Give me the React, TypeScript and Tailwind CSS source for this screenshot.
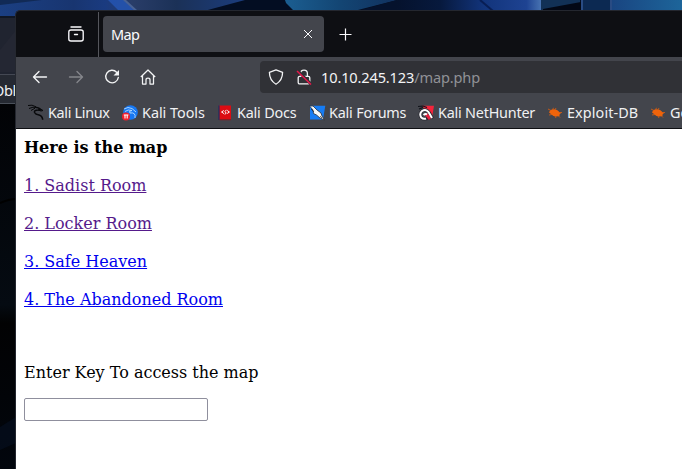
import type { ReactNode } from 'react';

function Wallpaper() {
  return (
    <svg className="absolute inset-0" width="682" height="469" viewBox="0 0 682 469">
      <defs>
        <linearGradient id="sky" gradientUnits="userSpaceOnUse" x1="0" y1="0" x2="245" y2="0">
          <stop offset="0" stopColor="#1b3f82" />
          <stop offset="0.3" stopColor="#183570" />
          <stop offset="0.43" stopColor="#1a3b80" />
          <stop offset="0.54" stopColor="#293d68" />
          <stop offset="0.72" stopColor="#1b3157" />
          <stop offset="1" stopColor="#1b3c7d" />
        </linearGradient>
        <linearGradient id="ray" gradientUnits="userSpaceOnUse" x1="285" y1="0" x2="397" y2="0">
          <stop offset="0" stopColor="#1b5e91" />
          <stop offset="0.5" stopColor="#134573" />
          <stop offset="1" stopColor="#11315f" />
        </linearGradient>
        <linearGradient id="blue" gradientUnits="userSpaceOnUse" x1="397" y1="0" x2="541" y2="0">
          <stop offset="0" stopColor="#05122d" />
          <stop offset="0.3" stopColor="#07193d" />
          <stop offset="0.6" stopColor="#12347b" />
          <stop offset="0.9" stopColor="#1e4392" />
          <stop offset="1" stopColor="#4772b1" />
        </linearGradient>
        <linearGradient id="right" gradientUnits="userSpaceOnUse" x1="612" y1="0" x2="682" y2="0">
          <stop offset="0" stopColor="#194581" />
          <stop offset="1" stopColor="#1d659a" />
        </linearGradient>
        <linearGradient id="side" x1="0" x2="0" y1="0" y2="1">
          <stop offset="0" stopColor="#020306" />
          <stop offset="0.55" stopColor="#050b12" />
          <stop offset="0.6" stopColor="#020203" />
          <stop offset="1" stopColor="#02060d" />
        </linearGradient>
      </defs>
      <rect width="682" height="469" fill="#030d22" />
      <path d="M0 0H245L204 11L16 26H0Z" fill="url(#sky)" />
      <path d="M0 0H42L0 5Z" fill="#112a56" />
      <path d="M108 0H124L136 11H119Z" fill="#2455b3" opacity=".85" />
      <path d="M123 0H126L138 11H135Z" fill="#496293" />
      <path d="M285 0H397L354 11H294L286 3Z" fill="url(#ray)" />
      <path d="M397 0H541V12H354Z" fill="url(#blue)" />
      <path d="M480 0L493 11" stroke="#081e55" strokeWidth="2" />
      <path d="M541 0H580V12H541Z" fill="#123156" />
      <path d="M543 9L581 2V12H543Z" fill="#030815" />
      <path d="M581 0H611V12H581Z" fill="#0c2952" />
      <path d="M581 0H583V12H581ZM610 0H612V12H610Z" fill="#294b83" />
      <rect x="612" width="70" height="12" fill="url(#right)" />
      <path d="M0 17H16V105H0Z" fill="#202430" />
      <path d="M0 17H16" stroke="#101725" strokeWidth="2" />
      <path d="M0 50L16 30V72H0Z" fill="#242733" />
      <rect y="74" width="16" height="1" fill="#444853" />
      <rect y="75" width="16" height="28" fill="#252932" />
      <rect y="103" width="16" height="1" fill="#4a505a" />
      <rect y="104" width="16" height="365" fill="url(#side)" />
      <path d="M0 203Q9 199 16 199" fill="none" stroke="#000" strokeWidth="2" />
      <path d="M0 427L16 417V443L0 450Z" fill="#061126" opacity=".5" />
    </svg>
  );
}

function ArrowIcon({ right = false }: { right?: boolean }) {
  return (
    <svg width="16" height="16" viewBox="0 0 16 16" fill="none" stroke="currentColor" strokeWidth="1.35" strokeLinecap="round" strokeLinejoin="round">
      <path d={right ? 'M1.5 8H14.5M9 2.5L14.5 8L9 13.5' : 'M14.5 8H1.5M7 2.5L1.5 8L7 13.5'} />
    </svg>
  );
}

function Dragon() {
  return (
    <svg width="17" height="17" viewBox="0 0 17 17" fill="none" stroke="#08090b" strokeWidth="1">
      <path d="M0 1.5L4 1.2L8 2.8M1 4.5L5 3.2L8 3.5M3 6.5L7 4.2" />
      <path d="M7 3.2Q10.5 3 12.5 5.8L10 6Q6 6 6.5 8.5Q7.5 10.5 11 11Q14.5 12 14.7 15.8" strokeWidth="1.5" />
      <path d="M11 4L15 6.5L13 7L10 6" />
    </svg>
  );
}

function ToolsIcon() {
  return (
    <svg width="16" height="16" viewBox="0 0 16 16">
      <circle cx="8.5" cy="7.5" r="7.3" fill="#1677f2" />
      <path d="M2 4L6 2.5L10 3.5L14 7M3 6.5Q6 4 10 5.5Q6 6 8 8Q14 7 13 13" fill="none" stroke="#b7dcff" strokeWidth=".9" />
      <circle cx="4" cy="11.5" r="4" fill="#f0202d" />
      <path d="M1.8 10H6.4M3 10V13.5M5.2 10V13.5" stroke="white" strokeWidth="1.1" />
    </svg>
  );
}

function DocsIcon() {
  return (
    <svg width="16" height="16" viewBox="0 0 16 16">
      <path d="M2 .5H14V14H2Z" fill="#dc0c12" />
      <path d="M2 .5V15" stroke="#202b62" strokeWidth="1.2" />
      <path d="M2.5 14.7H14" stroke="#861d24" strokeWidth="1.2" />
      <path d="M6.8 5.5L4.5 7L7.2 8.7M9.5 4.8L8 6.5L9.2 8L8 9.5M10.2 5.5L12.4 7L10.2 8.5" fill="none" stroke="white" strokeWidth="1" />
    </svg>
  );
}

function ForumsIcon() {
  return (
    <svg width="17" height="16" viewBox="0 0 17 16">
      <path d="M1 .8H16.3L14 14.5H1Z" fill="#167cf4" />
      <path d="M.5 1L4 1L8 5L12 8L13 11L15.5 15L11 13L7.5 10L4.5 8.5L4 5Z" fill="#f2f5f6" stroke="#292f39" strokeWidth=".8" />
      <path d="M2 4L5 7M11 11L13 13" stroke="#14171d" strokeWidth=".6" />
    </svg>
  );
}

function NetHunterIcon() {
  return (
    <svg width="16" height="16" viewBox="0 0 16 16">
      <path d="M4 .8H16L14 13Z" fill="#f3243b" />
      <path d="M0 1.5L5 1L9 2.5M1 4L5 2.5" fill="none" stroke="#101218" strokeWidth="1.1" />
      <path d="M10.5 13Q6 15 3.2 12.5Q1 8.5 4 6Q8 3.5 11 7.5L14.5 13.5" fill="none" stroke="#292932" strokeWidth="3.4" />
      <path d="M8 9L12 14" stroke="#e51d3a" strokeWidth="3" />
      <path d="M8 13.5Q5.5 14.5 3.2 12.5Q1 8.5 4 6Q8 3.5 10.5 7L14 13M5.5 10Q7.5 8.5 9 9.5" fill="none" stroke="#fff" strokeWidth="2" />
    </svg>
  );
}

function BugIcon() {
  return (
    <svg width="16" height="16" viewBox="0 0 16 16">
      <path d="M3 5.5Q6.5 3.3 10 5Q12 6 12.5 7.5L14 8L12.5 9.5L12.5 11L9.5 11.5Q6 11.5 4 9L2 7.5Z" fill="#ef640b" />
      <path d="M4 5.5L1 4M5.5 4.8L6.5 2.8M8 4.8L9 3M5 9.5L2 10M8 11L9 13M11 10.5L13 12.5M11.5 7.5H15" stroke="#df5e0c" strokeWidth=".8" />
    </svg>
  );
}

const bookmarks: { label: string; width: string; tracking: string; icon: ReactNode }[] = [
  { label: 'Kali Linux', width: 'w-[94px]', tracking: 'tracking-[-0.32px]', icon: <Dragon /> },
  { label: 'Kali Tools', width: 'w-[95px]', tracking: 'tracking-[-0.03px]', icon: <ToolsIcon /> },
  { label: 'Kali Docs', width: 'w-[92px]', tracking: 'tracking-[-0.2px]', icon: <DocsIcon /> },
  { label: 'Kali Forums', width: 'w-[109px]', tracking: 'tracking-[-0.2px]', icon: <ForumsIcon /> },
  { label: 'Kali NetHunter', width: 'w-[129px]', tracking: 'tracking-[-0.22px]', icon: <NetHunterIcon /> },
  { label: 'Exploit-DB', width: 'w-[103px]', tracking: 'tracking-[0.1px]', icon: <BugIcon /> },
  { label: 'Google Hacking DB', width: 'w-[160px]', tracking: 'tracking-normal', icon: <BugIcon /> },
];

function TabBar() {
  return (
    <div className="flex h-[46px] shrink-0 bg-[#0e0f13] pt-[1px] text-[#fbfbfe]">
      <div className="flex w-[83px] border-r border-[#55565c] pl-[52px] pt-[14px]">
        <svg width="16" height="16" viewBox="0 0 16 16" fill="none" stroke="currentColor" strokeWidth="1.35" strokeLinecap="round">
          <path d="M3 1H13M6.5 8.5H9.5M.8 6Q.8 4 3 4H13Q15.2 4 15.2 6V13Q15.2 15 13 15H3Q.8 15 .8 13Z" />
        </svg>
      </div>
      <div className="ml-1 mt-1 flex h-9 w-[221px] items-center justify-between rounded bg-[#43454c] pl-2 pr-[11px]">
        <span className="text-[14.5px] leading-5 tracking-[-0.6px]">Map</span>
        <svg width="10" height="10" viewBox="0 0 10 10" stroke="currentColor"><path d="M1 1L9 9M9 1L1 9" /></svg>
      </div>
      <svg className="ml-[15px] mt-4" width="13" height="13" viewBox="0 0 13 13" stroke="currentColor" strokeWidth="1.2"><path d="M.5 6.5H12.5M6.5 .5V12.5" /></svg>
    </div>
  );
}

function NavigationBar() {
  return (
    <div className="flex h-10 shrink-0 items-center bg-[#43454c] text-[#f3f4f5]">
      <div className="ml-4 flex w-[228px] gap-5">
        <ArrowIcon />
        <span className="text-[#85868b]"><ArrowIcon right /></span>
        <svg width="16" height="16" viewBox="0 0 16 16" fill="none" stroke="currentColor" strokeWidth="1.4" strokeLinecap="round">
          <path d="M12.6 3.2A6.3 6.3 0 1 0 14.3 8.5" /><path d="M15 1V6.5H9.5Z" fill="currentColor" stroke="none" />
        </svg>
        <svg width="16" height="16" viewBox="0 0 16 16" fill="none" stroke="currentColor" strokeWidth="1.25" strokeLinejoin="round">
          <path d="M.8 8L8 1L15.2 8M2.5 6.8V15H6V10.8Q6 9 8 9Q10 9 10 10.8V15H13.5V6.8" />
        </svg>
      </div>
      <div className="flex h-8 w-[422px] items-center rounded-l bg-[#303136] pl-2">
        <svg width="16" height="16" viewBox="0 0 16 16" fill="none" stroke="currentColor" strokeWidth="1.3" strokeLinejoin="round">
          <path d="M8 .8L14.6 3.3Q14.5 11.5 8 15.2Q1.5 11.5 1.4 3.3Z" />
        </svg>
        <svg className="ml-3" width="16" height="16" viewBox="0 0 16 16" fill="none" stroke="currentColor" strokeWidth="1.3">
          <path d="M4.6 7V4.5a3.4 3.4 0 0 1 6.8 0V7" />
          <rect x="2.2" y="7.3" width="11.6" height="7.6" rx="1.5" />
          <path d="M2 2L15 15" stroke="#303136" strokeWidth="3" /><path d="M1 2L15 15.5" stroke="#e5174a" strokeWidth="1.5" />
        </svg>
        <span className="ml-[9px] whitespace-nowrap text-[14.6px] leading-6 tracking-[-0.16px]">10.10.245.123<span className="text-[#909196]">/map.php</span></span>
      </div>
    </div>
  );
}

export default function App() {
  return (
    <div className="relative h-[469px] w-[682px] overflow-hidden bg-[#030713] font-['Noto_Sans',sans-serif]">
      <Wallpaper />
      <span className="absolute -left-[7px] top-[78px] text-[14.5px] leading-6 tracking-[-0.4px] text-[#f0f1f3]">Obl</span>
      <main className="relative ml-[15px] mt-[10px] flex h-[459px] w-[667px] flex-col overflow-hidden rounded-tl-[5px] border-l border-t border-[#24272f]">
        <TabBar />
        <NavigationBar />
        <nav className="flex h-[32px] shrink-0 items-center overflow-hidden border-b border-[#0e0f13] bg-[#43454c] pl-3 text-[14.4px] leading-5 text-[#f0f1f3]">
          {bookmarks.map(({ label, width, tracking, icon }) => (
            <div key={label} className={`flex shrink-0 items-center ${width}`}>
              <span className="flex w-5 shrink-0">{icon}</span>
              <span className={`whitespace-nowrap ${tracking}`}>{label}</span>
            </div>
          ))}
        </nav>
        <section className="flex-1 bg-white px-2 pt-[9px] font-['DejaVu_Serif',serif] text-base leading-[19px] text-black">
          <h1 className="font-bold">Here is the map</h1>
          <div className="mt-[19px] flex flex-col items-start gap-[19px]">
            <a className="text-[#551a8b] underline" href="#sadist">1. Sadist Room</a>
            <a className="text-[#551a8b] underline" href="#locker">2. Locker Room</a>
            <a className="text-[#0000ee] underline" href="#safe">3. Safe Heaven</a>
            <a className="text-[#0000ee] underline" href="#abandoned">4. The Abandoned Room</a>
          </div>
          <p className="mt-[54px]">Enter Key To access the map</p>
          <input aria-label="Map key" className="mt-4 block h-[23px] w-[184px] rounded-[2px] border border-[#8f8f9d] bg-white px-1 outline-none" />
        </section>
      </main>
    </div>
  );
}
